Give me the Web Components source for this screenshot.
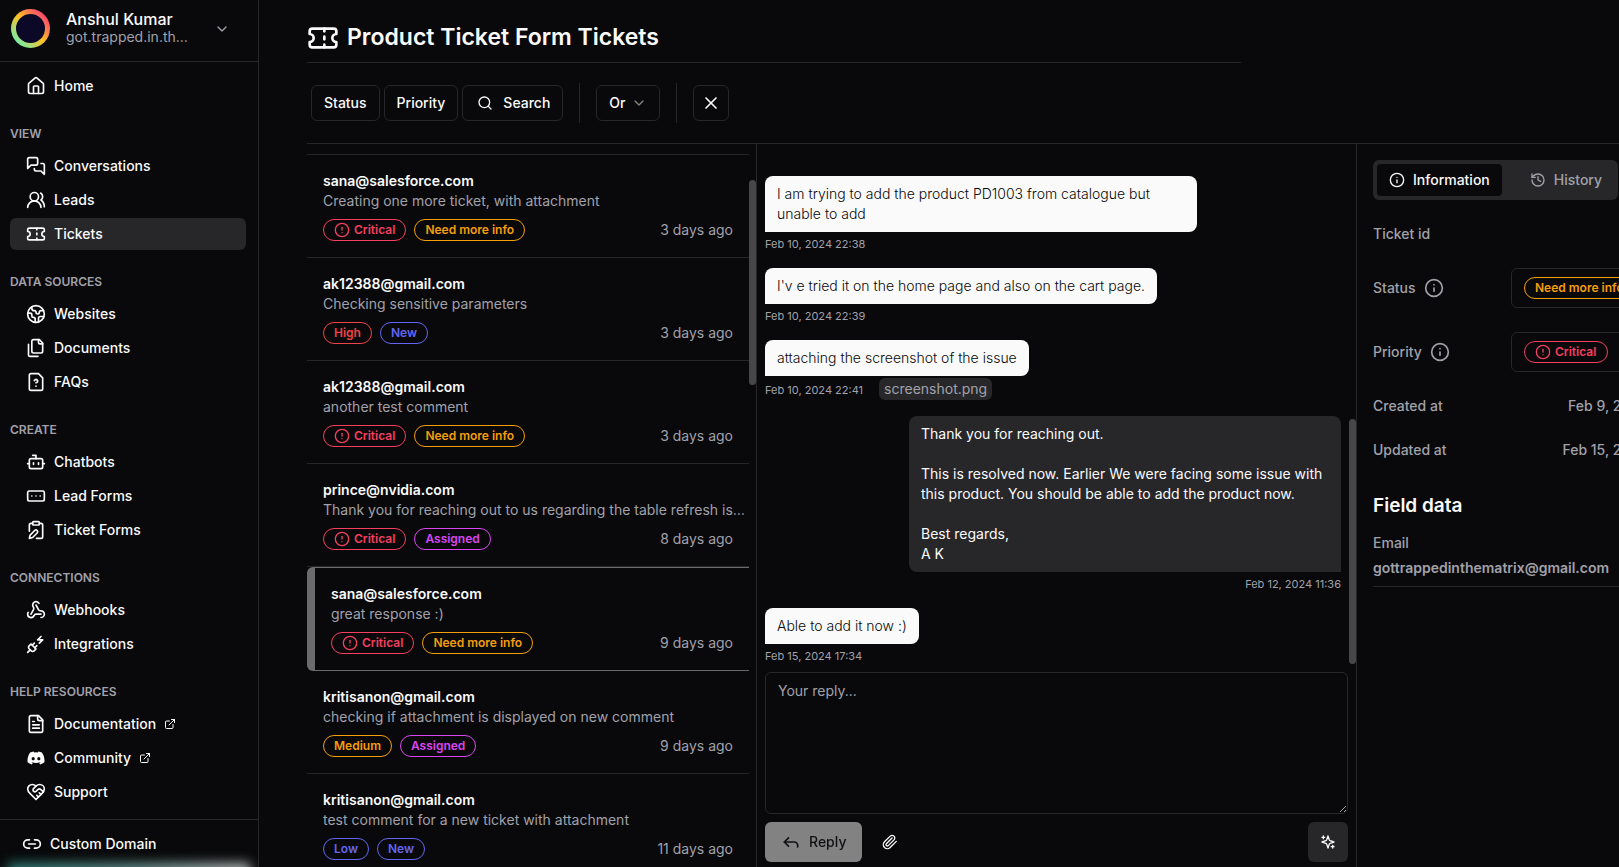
<!DOCTYPE html>
<html lang="en">
<head>
<meta charset="utf-8">
<meta name="viewport" content="width=device-width, initial-scale=1">
<title>Product Ticket Form Tickets</title>
<style>
  :root {
    --bg: #09090b;
    --line: #27272a;
    --muted: #a1a1aa;
    --fg: #fafafa;
    --thumb: #474747;
  }
  * { box-sizing: border-box; }
  body {
    margin: 0;
    background: var(--bg);
    color: var(--fg);
    font: 400 14px/20px Inter, "Liberation Sans", sans-serif;
    overflow: hidden;
  }
</style>
</head>
<body>
<app-shell>
  <side-bar slot="sidebar">
    <account-switcher slot="head" name="Anshul Kumar" mail="got.trapped.in.the.matrix@gmail.com"></account-switcher>
    <nav-item icon="house">Home</nav-item>
    <nav-group label="VIEW">
      <nav-item icon="messages">Conversations</nav-item>
      <nav-item icon="users">Leads</nav-item>
      <nav-item icon="ticket" active>Tickets</nav-item>
    </nav-group>
    <nav-group label="DATA SOURCES">
      <nav-item icon="earth">Websites</nav-item>
      <nav-item icon="files">Documents</nav-item>
      <nav-item icon="faq">FAQs</nav-item>
    </nav-group>
    <nav-group label="CREATE">
      <nav-item icon="bot">Chatbots</nav-item>
      <nav-item icon="form">Lead Forms</nav-item>
      <nav-item icon="clipboard">Ticket Forms</nav-item>
    </nav-group>
    <nav-group label="CONNECTIONS">
      <nav-item icon="webhook">Webhooks</nav-item>
      <nav-item icon="plug">Integrations</nav-item>
    </nav-group>
    <nav-group label="HELP RESOURCES">
      <nav-item icon="doc" external>Documentation</nav-item>
      <nav-item icon="discord" external>Community</nav-item>
      <nav-item icon="support">Support</nav-item>
    </nav-group>
    <nav-item slot="foot" icon="link">Custom Domain</nav-item>
  </side-bar>

  <page-header slot="main" icon="ticket">Product Ticket Form Tickets</page-header>
  <filter-bar slot="main"></filter-bar>

  <ticket-workspace slot="main">
    <ticket-list slot="list">
      <ticket-row time="3 days ago">
        <span slot="from">sana@salesforce.com</span>Creating one more ticket, with attachment
        <status-badge slot="tags" tone="critical" icon>Critical</status-badge>
        <status-badge slot="tags" tone="amber">Need more info</status-badge>
      </ticket-row>
      <ticket-row time="3 days ago">
        <span slot="from">ak12388@gmail.com</span>Checking sensitive parameters
        <status-badge slot="tags" tone="red">High</status-badge>
        <status-badge slot="tags" tone="indigo">New</status-badge>
      </ticket-row>
      <ticket-row time="3 days ago">
        <span slot="from">ak12388@gmail.com</span>another test comment
        <status-badge slot="tags" tone="critical" icon>Critical</status-badge>
        <status-badge slot="tags" tone="amber">Need more info</status-badge>
      </ticket-row>
      <ticket-row time="8 days ago">
        <span slot="from">prince@nvidia.com</span>Thank you for reaching out to us regarding the table refresh issue
        <status-badge slot="tags" tone="critical" icon>Critical</status-badge>
        <status-badge slot="tags" tone="fuchsia">Assigned</status-badge>
      </ticket-row>
      <ticket-row time="9 days ago" selected>
        <span slot="from">sana@salesforce.com</span>great response :)
        <status-badge slot="tags" tone="critical" icon>Critical</status-badge>
        <status-badge slot="tags" tone="amber">Need more info</status-badge>
      </ticket-row>
      <ticket-row time="9 days ago">
        <span slot="from">kritisanon@gmail.com</span>checking if attachment is displayed on new comment
        <status-badge slot="tags" tone="amber">Medium</status-badge>
        <status-badge slot="tags" tone="fuchsia">Assigned</status-badge>
      </ticket-row>
      <ticket-row time="11 days ago">
        <span slot="from">kritisanon@gmail.com</span>test comment for a new ticket with attachment
        <status-badge slot="tags" tone="indigo">Low</status-badge>
        <status-badge slot="tags" tone="indigo">New</status-badge>
      </ticket-row>
    </ticket-list>

    <chat-thread slot="chat">
      <chat-message time="Feb 10, 2024 22:38">I am trying to add the product PD1003 from catalogue but unable to add</chat-message>
      <chat-message time="Feb 10, 2024 22:39">I'v e tried it on the home page and also on the cart page.</chat-message>
      <chat-message time="Feb 10, 2024 22:41" file="screenshot.png">attaching the screenshot of the issue</chat-message>
      <chat-message time="Feb 12, 2024 11:36" own>Thank you for reaching out.<br><br>This is resolved now. Earlier We were facing some issue with this product. You should be able to add the product now.<br><br>Best regards,<br>A K</chat-message>
      <chat-message time="Feb 15, 2024 17:34">Able to add it now :)</chat-message>
      <reply-box slot="composer"></reply-box>
    </chat-thread>

    <ticket-details slot="details">
      <detail-row label="Ticket id"></detail-row>
      <detail-row label="Status" hint><badge-select tone="amber" label="Status" value="Need more info"></badge-select></detail-row>
      <detail-row label="Priority" hint><badge-select tone="critical" icon label="Priority" value="Critical"></badge-select></detail-row>
      <detail-row label="Created at">Feb 9, 2024</detail-row>
      <detail-row label="Updated at">Feb 15, 2024</detail-row>
      <field-value slot="fields" label="Email">gottrappedinthematrix@gmail.com</field-value>
    </ticket-details>
  </ticket-workspace>
</app-shell>

<script>
const ICONS = {
  house: '<path d="M15 21v-8a1 1 0 0 0-1-1h-4a1 1 0 0 0-1 1v8"/><path d="M3 10a2 2 0 0 1 .709-1.528l7-5.999a2 2 0 0 1 2.582 0l7 5.999A2 2 0 0 1 21 10v9a2 2 0 0 1-2 2H5a2 2 0 0 1-2-2z"/>',
  messages: '<path d="M14 9a2 2 0 0 1-2 2H6l-4 4V4a2 2 0 0 1 2-2h8a2 2 0 0 1 2 2z"/><path d="M18 9h2a2 2 0 0 1 2 2v11l-4-4h-6a2 2 0 0 1-2-2v-1"/>',
  users: '<path d="M18 21a8 8 0 0 0-16 0"/><circle cx="10" cy="8" r="5"/><path d="M22 20c0-3.37-2-6.5-4-8a5 5 0 0 0-.45-8.3"/>',
  ticket: '<path d="M2 9a3 3 0 0 1 0 6v2a2 2 0 0 0 2 2h16a2 2 0 0 0 2-2v-2a3 3 0 0 1 0-6V7a2 2 0 0 0-2-2H4a2 2 0 0 0-2 2Z"/><path d="M13 5v2"/><path d="M13 17v2"/><path d="M13 11v2"/>',
  earth: '<path d="M21.54 15H17a2 2 0 0 0-2 2v4.54"/><path d="M7 3.34V5a3 3 0 0 0 3 3 2 2 0 0 1 2 2c0 1.1.9 2 2 2a2 2 0 0 0 2-2c0-1.1.9-2 2-2h3.17"/><path d="M11 21.95V18a2 2 0 0 0-2-2 2 2 0 0 1-2-2v-1a2 2 0 0 0-2-2H2.05"/><circle cx="12" cy="12" r="10"/>',
  files: '<path d="M20 7h-3a2 2 0 0 1-2-2V2"/><path d="M9 18a2 2 0 0 1-2-2V4a2 2 0 0 1 2-2h7l4 4v10a2 2 0 0 1-2 2Z"/><path d="M3 7.6v12.8A1.6 1.6 0 0 0 4.6 22h9.8"/>',
  faq: '<path d="M12 17h.01"/><path d="M15 2H6a2 2 0 0 0-2 2v16a2 2 0 0 0 2 2h12a2 2 0 0 0 2-2V7z"/><path d="M10 10.3c.2-.4.5-.8.9-1a2.1 2.1 0 0 1 2.6.4c.3.4.5.8.5 1.3 0 1.3-2 2-2 2"/>',
  bot: '<path d="M12 8V4H8"/><rect width="16" height="12" x="4" y="8" rx="2"/><path d="M2 14h2"/><path d="M20 14h2"/><path d="M15 13v2"/><path d="M9 13v2"/>',
  form: '<rect width="20" height="12" x="2" y="6" rx="2"/><path d="M12 12h.01"/><path d="M17 12h.01"/><path d="M7 12h.01"/>',
  clipboard: '<rect width="8" height="4" x="8" y="2" rx="1"/><path d="M10.42 12.61a2.1 2.1 0 1 1 2.97 2.97L7.95 21 4 22l.99-3.95 5.43-5.44Z"/><path d="M16 4h2a2 2 0 0 1 2 2v14a2 2 0 0 1-2 2h-5.5"/><path d="M4 13.5V6a2 2 0 0 1 2-2h2"/>',
  webhook: '<path d="M18 16.98h-5.99c-1.1 0-1.95.94-2.48 1.9A4 4 0 0 1 2 17c.01-.7.2-1.4.57-2"/><path d="m6 17 3.13-5.78c.53-.97.1-2.18-.5-3.1a4 4 0 1 1 6.89-4.06"/><path d="m12 6 3.13 5.73C15.66 12.7 16.9 13 18 13a4 4 0 0 1 0 8"/>',
  plug: '<path d="M6.3 20.3a2.4 2.4 0 0 0 3.4 0L12 18l-6-6-2.3 2.3a2.4 2.4 0 0 0 0 3.4Z"/><path d="m2 22 3-3"/><path d="M7.5 13.5 10 11"/><path d="M10.5 16.5 13 14"/><path d="m18 3-4 4h6l-4 4"/>',
  doc: '<path d="M15 2H6a2 2 0 0 0-2 2v16a2 2 0 0 0 2 2h12a2 2 0 0 0 2-2V7Z"/><path d="M14 2v4a2 2 0 0 0 2 2h4"/><path d="M10 9H8"/><path d="M16 13H8"/><path d="M16 17H8"/>',
  discord: '<path transform="translate(1.8 1.8) scale(.85)" fill="currentColor" stroke="none" d="M20.317 4.37a19.791 19.791 0 0 0-4.885-1.515.074.074 0 0 0-.079.037c-.21.375-.444.864-.608 1.25a18.27 18.27 0 0 0-5.487 0 12.64 12.64 0 0 0-.617-1.25.077.077 0 0 0-.079-.037A19.736 19.736 0 0 0 3.677 4.37a.07.07 0 0 0-.032.027C.533 9.046-.32 13.58.099 18.057a.082.082 0 0 0 .031.057 19.9 19.9 0 0 0 5.993 3.03.078.078 0 0 0 .084-.028c.462-.63.874-1.295 1.226-1.994a.076.076 0 0 0-.041-.106 13.107 13.107 0 0 1-1.872-.892.077.077 0 0 1-.008-.128 10.2 10.2 0 0 0 .372-.292.074.074 0 0 1 .077-.01c3.928 1.793 8.18 1.793 12.062 0a.074.074 0 0 1 .078.01c.12.098.246.198.373.292a.077.077 0 0 1-.006.127 12.299 12.299 0 0 1-1.873.892.077.077 0 0 0-.041.107c.36.698.772 1.362 1.225 1.993a.076.076 0 0 0 .084.028 19.839 19.839 0 0 0 6.002-3.03.077.077 0 0 0 .032-.054c.5-5.177-.838-9.674-3.549-13.66a.061.061 0 0 0-.031-.03zM8.02 15.33c-1.183 0-2.157-1.085-2.157-2.419 0-1.333.956-2.419 2.157-2.419 1.21 0 2.176 1.096 2.157 2.42 0 1.333-.956 2.418-2.157 2.418zm7.975 0c-1.183 0-2.157-1.085-2.157-2.419 0-1.333.955-2.419 2.157-2.419 1.21 0 2.176 1.096 2.157 2.42 0 1.333-.946 2.418-2.157 2.418z"/>',
  support: '<path d="M19 14c1.49-1.46 3-3.21 3-5.5A5.5 5.5 0 0 0 16.5 3c-1.76 0-3 .5-4.5 2-1.5-1.5-2.74-2-4.5-2A5.5 5.5 0 0 0 2 8.5c0 2.3 1.5 4.05 3 5.5l7 7Z"/><path d="M12 5 9.04 7.96a2.17 2.17 0 0 0 0 3.08c.82.82 2.13.85 3 .07l2.07-1.9a2.82 2.82 0 0 1 3.79 0l2.96 2.66"/><path d="m18 15-2-2"/><path d="m15 18-2-2"/>',
  external: '<path d="M15 3h6v6"/><path d="M10 14 21 3"/><path d="M18 13v6a2 2 0 0 1-2 2H5a2 2 0 0 1-2-2V8a2 2 0 0 1 2-2h6"/>',
  link: '<path d="M9 17H7A5 5 0 0 1 7 7h2"/><path d="M15 7h2a5 5 0 1 1 0 10h-2"/><path d="M8 12h8"/>',
  search: '<circle cx="11" cy="11" r="8"/><path d="m21 21-4.3-4.3"/>',
  chevron: '<path d="m6 9 6 6 6-6"/>',
  close: '<path d="M18 6 6 18"/><path d="m6 6 12 12"/>',
  alert: '<circle cx="12" cy="12" r="10"/><path d="M12 8v4"/><path d="M12 16h.01"/>',
  info: '<circle cx="12" cy="12" r="10"/><path d="M12 16v-4"/><path d="M12 8h.01"/>',
  history: '<path d="M3 12a9 9 0 1 0 9-9 9.75 9.75 0 0 0-6.74 2.74L3 8"/><path d="M3 3v5h5"/><path d="M12 7v5l4 2"/>',
  reply: '<path d="m9 17-5-5 5-5"/><path d="M20 18v-2a4 4 0 0 0-4-4H4"/>',
  clip: '<path d="m21.44 11.05-9.19 9.19a6 6 0 0 1-8.49-8.49l8.57-8.57A4 4 0 1 1 18 8.84l-8.59 8.57a2 2 0 0 1-2.83-2.83l8.49-8.48"/>',
  sparkles: '<path d="m12 3-1.912 5.813a2 2 0 0 1-1.275 1.275L3 12l5.813 1.912a2 2 0 0 1 1.275 1.275L12 21l1.912-5.813a2 2 0 0 1 1.275-1.275L21 12l-5.813-1.912a2 2 0 0 1-1.275-1.275L12 3Z"/><path d="M5 3v4"/><path d="M19 17v4"/><path d="M3 5h4"/><path d="M17 19h4"/>'
};

const TONES = `
  :host([tone="critical"]) { --tone: #f43f5e; }
  :host([tone="red"]) { --tone: #ef4444; }
  :host([tone="amber"]) { --tone: #f59e0b; }
  :host([tone="indigo"]) { --tone: #6366f1; }
  :host([tone="fuchsia"]) { --tone: #d946ef; }
`;

/* Registers an element whose shadow root is built from a style and a markup function. */
function define(name, css, markup) {
  customElements.define(name, class extends HTMLElement {
    connectedCallback() {
      if (this.shadowRoot) return;
      const attr = key => this.getAttribute(key) || '';
      this.attachShadow({ mode: 'open' }).innerHTML =
        `<style>*{box-sizing:border-box}button,select,textarea{font:inherit;color:inherit;margin:0}${css}</style>${markup(this, attr)}`;
    }
  });
}

define('ui-icon', `
  :host { display: block; flex: none; width: var(--size, 20px); height: var(--size, 20px); }
  svg { display: block; width: 100%; height: 100%; }
`, (el, a) => `<svg viewBox="0 0 24 24" fill="none" stroke="currentColor" stroke-width="2" stroke-linecap="round" stroke-linejoin="round" aria-hidden="true">${ICONS[a('name')]}</svg>`);

define('app-shell', `
  :host { display: grid; grid-template-columns: 259px minmax(0, 1fr); height: 100vh; }
  main { display: flex; flex-direction: column; min-height: 0; padding-left: 48px; }
`, () => `<slot name="sidebar"></slot><main><slot name="main"></slot></main>`);

define('side-bar', `
  :host { display: flex; flex-direction: column; min-height: 0; border-right: 1px solid var(--line); position: relative; overflow: hidden; }
  nav { flex: 1; min-height: 0; overflow: hidden; padding: 8px 12px 0 10px; }
  footer { height: 48px; border-top: 1px solid var(--line); padding: 8px 12px 0 6px; }
  .glow { position: absolute; left: 8px; right: 8px; bottom: -12px; height: 16px; filter: blur(6px);
    background: linear-gradient(90deg, #2a7a72, #5c8a86 50%, #b4b4b4); }
`, () => `<slot name="head"></slot><nav><slot></slot></nav><footer><slot name="foot"></slot></footer><div class="glow"></div>`);

define('account-switcher', `
  :host { display: block; border-bottom: 1px solid var(--line); }
  button { display: flex; align-items: center; width: 100%; height: 61px; padding: 0 28px 4px 11px; border: 0; background: none; text-align: left; }
  .ring { flex: none; width: 39px; height: 39px; border-radius: 50%; padding: 5px; background: linear-gradient(45deg, #3fffd8, #ffc024 50%, #f7148f); }
  .ring i { display: block; height: 100%; border-radius: 50%; background: #0b0828; }
  .who { flex: 1; min-width: 0; margin: 0 23px 2px 16px; }
  b, .mail { display: block; line-height: 18px; }
  b { font-size: 16px; font-weight: 500; }
  .mail { color: var(--muted); overflow: hidden; text-overflow: ellipsis; white-space: nowrap; }
  ui-icon { --size: 16px; color: var(--muted); }
`, (el, a) => `<button type="button"><span class="ring"><i></i></span><span class="who"><b>${a('name')}</b><span class="mail">${a('mail')}</span></span><ui-icon name="chevron"></ui-icon></button>`);

define('nav-group', `
  :host { display: block; padding-top: 24px; }
  h2 { margin: 0 0 8px; font-size: 12px; line-height: 16px; font-weight: 600; color: var(--muted); }
  div { display: flex; flex-direction: column; gap: 2px; }
`, (el, a) => `<h2>${a('label')}</h2><div><slot></slot></div>`);

define('nav-item', `
  :host { display: block; }
  a { display: flex; align-items: center; gap: 8px; height: 32px; padding: 0 16px; border-radius: 6px; color: inherit; font-weight: 500; text-decoration: none; }
  :host([active]) a { background: var(--line); }
  .ext { --size: 12px; }
`, (el, a) => `<a href="#"><ui-icon name="${a('icon')}"></ui-icon><span><slot></slot></span>${el.hasAttribute('external') ? '<ui-icon class="ext" name="external"></ui-icon>' : ''}</a>`);

define('page-header', `
  :host { display: block; flex: none; width: calc(100% - 378px); padding: 21px 0 8px; border-bottom: 1px solid var(--line); }
  h1 { display: flex; align-items: center; gap: 8px; margin: 0; font-size: 23px; line-height: 33px; font-weight: 600; }
  ui-icon { --size: 32px; }
`, (el, a) => `<h1><ui-icon name="${a('icon')}"></ui-icon><span><slot></slot></span></h1>`);

define('filter-bar', `
  :host { display: flex; align-items: center; flex: none; height: 81px; padding: 0 4px 1px; border-bottom: 1px solid var(--line); font-weight: 500; }
  button, .pick { display: flex; align-items: center; height: 36px; padding: 0 12px; border: 1px solid var(--line); border-radius: 6px; background: none; margin-right: 4px; }
  .find { gap: 10px; padding-left: 14px; }
  .find ui-icon { --size: 16px; }
  hr { width: 1px; height: 40px; margin: 0 16px 0 12px; border: 0; background: var(--line); }
  .pick { gap: 5px; }
  .pick select { appearance: none; border: 0; padding: 0; background: none; font-weight: 500; }
  .pick ui-icon { --size: 16px; opacity: .5; }
  .clear { padding: 0 7px; }
`, () => `<button type="button">Status</button><button type="button">Priority</button>
  <button type="button" class="find"><ui-icon name="search"></ui-icon>Search</button><hr>
  <label class="pick"><select aria-label="Match"><option>Or</option></select><ui-icon name="chevron"></ui-icon></label><hr>
  <button type="button" class="clear" aria-label="Clear filters"><ui-icon name="close"></ui-icon></button>`);

define('ticket-workspace', `
  :host { flex: 1; min-height: 0; display: grid; grid-template: minmax(0, 1fr) / minmax(0, 3fr) minmax(0, 4fr) 262px; }
`, () => `<slot name="list"></slot><slot name="chat"></slot><slot name="details"></slot>`);

define('ticket-list', `
  :host { display: block; position: relative; overflow: hidden; padding: 10px 7px 0 0; border-right: 1px solid var(--line); }
  .rows { border-top: 1px solid var(--line); }
  .thumb { position: absolute; right: 0; top: 5%; width: 7px; height: 205px; border-radius: 4px; background: var(--thumb); }
`, () => `<div class="rows"><slot></slot></div><div class="thumb"></div>`);

define('ticket-row', `
  :host { display: block; height: 103px; padding: 16px 0 16px 16px; border-bottom: 1px solid var(--line); }
  :host([selected]) { height: 104px; border: solid #6b6b6d; border-width: 1px 0 1px 8px; border-radius: 6px 0 0 6px; }
  .from { font-weight: 600; }
  .text { color: var(--muted); overflow: hidden; text-overflow: ellipsis; white-space: nowrap; }
  .meta { display: flex; align-items: center; gap: 8px; margin: 8px 16px 0 0; }
  time { margin-left: auto; color: var(--muted); }
`, (el, a) => `<div class="from"><slot name="from"></slot></div><div class="text"><slot></slot></div>
  <div class="meta"><slot name="tags"></slot><time>${a('time')}</time></div>`);

define('status-badge', `
  :host { display: flex; align-items: center; gap: 4px; height: 22px; padding: 0 10px; border: 1px solid var(--tone); border-radius: 11px; color: var(--tone); font-size: 12px; line-height: 16px; font-weight: 600; white-space: nowrap; }
  ui-icon { --size: 16px; }
  ${TONES}
`, el => `${el.hasAttribute('icon') ? '<ui-icon name="alert"></ui-icon>' : ''}<slot></slot>`);

define('chat-thread', `
  :host { display: flex; flex-direction: column; position: relative; overflow: hidden; padding: 0 8px 5px; border-right: 1px solid var(--line); }
  .log { flex: 1; min-height: 0; display: flex; flex-direction: column; justify-content: flex-end; gap: 12px; padding: 0 7px 4px 0; overflow: hidden; }
  .thumb { position: absolute; right: 0; top: 38%; width: 7px; height: 245px; border-radius: 4px; background: var(--thumb); }
`, () => `<div class="log"><slot></slot></div><slot name="composer"></slot><div class="thumb"></div>`);

define('chat-message', `
  :host { display: flex; flex-direction: column; align-items: flex-start; }
  .bubble { max-width: 432px; padding: 8px 12px; border-radius: 8px 8px 8px 0; background: #fafafa; color: #09090b; font-weight: 300; }
  .meta { display: flex; align-items: center; gap: 16px; min-height: 24px; font-size: 11px; line-height: 16px; color: var(--muted); }
  .file { padding: 0 5px; margin: 2px 0 4px; border-radius: 6px; background: var(--line); color: var(--muted); font-size: 14px; line-height: 22px; text-decoration: none; }
  :host([own]) { align-items: flex-end; }
  :host([own]) .bubble { border-radius: 8px 8px 0 8px; background: var(--line); color: var(--fg); font-weight: 400; }
`, (el, a) => `<div class="bubble"><slot></slot></div><div class="meta"><time>${a('time')}</time>${a('file') ? `<a class="file" href="#">${a('file')}</a>` : ''}</div>`);

define('reply-box', `
  :host { display: block; flex: none; }
  textarea { display: block; width: 100%; height: 142px; padding: 8px 12px; border: 1px solid var(--line); border-radius: 6px; background: none; resize: vertical; outline: 0; }
  textarea::placeholder { color: var(--muted); }
  .bar { display: flex; align-items: center; margin-top: 8px; }
  button { display: flex; align-items: center; justify-content: center; gap: 8px; height: 40px; padding: 0 12px; border: 0; border-radius: 6px; background: none; font-weight: 500; }
  .send { padding: 0 16px; background: var(--fg); color: #18181b; opacity: .5; }
  .attach { margin-left: 8px; }
  .ai { margin-left: auto; background: var(--line); }
  .attach ui-icon, .ai ui-icon { --size: 16px; }
`, () => `<textarea placeholder="Your reply..." aria-label="Your reply"></textarea>
  <div class="bar"><button type="button" class="send" disabled><ui-icon name="reply"></ui-icon>Reply</button>
  <button type="button" class="attach" aria-label="Attach file"><ui-icon name="clip"></ui-icon></button>
  <button type="button" class="ai" aria-label="Suggest reply"><ui-icon name="sparkles"></ui-icon></button></div>`);

define('ticket-details', `
  :host { display: block; overflow: hidden; padding: 16px 0 0 16px; color: var(--muted); font-weight: 500; }
  .inner { width: 275px; }
  .tabs { display: inline-flex; gap: 16px; padding: 4px; margin-bottom: 12px; border-radius: 6px; background: var(--line); vertical-align: top; }
  .tabs button { display: flex; align-items: center; gap: 8px; height: 32px; padding: 0 12px; border: 0; border-radius: 4px; background: none; }
  .tabs [aria-selected="true"] { background: var(--bg); color: var(--fg); }
  .tabs ui-icon { --size: 16px; }
  h2 { margin: 20px 0 13px; color: var(--fg); font-size: 19px; line-height: 28px; font-weight: 600; }
`, () => `<div class="inner"><div class="tabs" role="tablist">
  <button type="button" role="tab" aria-selected="true"><ui-icon name="info"></ui-icon>Information</button>
  <button type="button" role="tab" aria-selected="false"><ui-icon name="history"></ui-icon>History</button></div>
  <slot></slot><h2>Field data</h2><slot name="fields"></slot></div>`);

define('detail-row', `
  :host { display: flex; align-items: center; justify-content: space-between; padding: 12px 0; }
  .label { display: flex; align-items: center; gap: 8px; }
`, (el, a) => `<span class="label">${a('label')}${el.hasAttribute('hint') ? '<ui-icon name="info"></ui-icon>' : ''}</span><span><slot></slot></span>`);

define('badge-select', `
  :host { display: flex; align-items: center; width: 137px; height: 40px; padding: 0 12px; border: 1px solid var(--line); border-radius: 6px; }
  label { display: flex; align-items: center; gap: 4px; height: 22px; padding: 0 10px; border: 1px solid var(--tone); border-radius: 11px; color: var(--tone); }
  select { appearance: none; border: 0; padding: 0; background: none; font-size: 12px; line-height: 16px; font-weight: 600; }
  ui-icon { --size: 16px; }
  ${TONES}
`, (el, a) => `<label>${el.hasAttribute('icon') ? '<ui-icon name="alert"></ui-icon>' : ''}<select aria-label="${a('label')}"><option>${a('value')}</option></select></label>`);

define('field-value', `
  :host { display: block; padding-bottom: 8px; border-bottom: 1px solid var(--line); }
  span { display: block; margin-bottom: 5px; }
  div { font-weight: 600; }
`, (el, a) => `<span>${a('label')}</span><div><slot></slot></div>`);
</script>
</body>
</html>
